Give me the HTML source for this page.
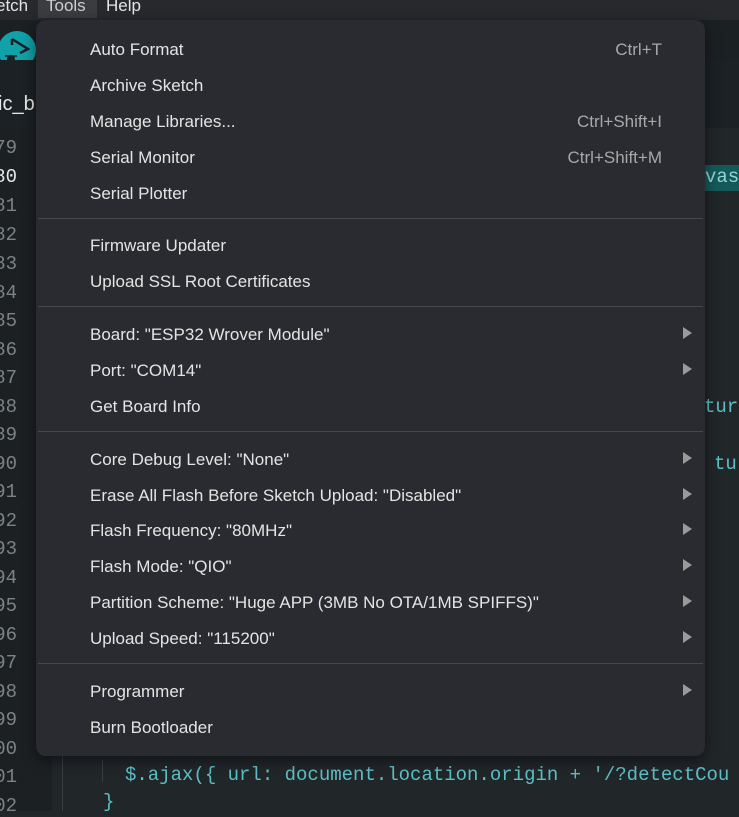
<!DOCTYPE html>
<html><head><meta charset="utf-8"><style>
body{margin:0;width:739px;height:811px;overflow:hidden;background:#212629;font-family:"Liberation Sans",sans-serif;position:relative}
.a{position:absolute}
.ln{position:absolute;left:-35px;width:52px;text-align:right;font-family:"Liberation Mono",monospace;font-size:19px;color:#7d8285}
.menu{position:absolute;left:36px;top:20px;width:669px;height:736px;background:#2a2b30;border-radius:10px;box-shadow:0 4px 14px rgba(0,0,0,.5)}
.it{position:absolute;left:54px;font-size:17px;color:#e4e4e4;line-height:20px}
.sc{position:absolute;right:43px;font-size:17px;color:#a8a8a8;line-height:20px}
.ar{position:absolute;left:647px;width:0;height:0;border-top:6px solid transparent;border-bottom:6px solid transparent;border-left:9px solid #9a9a9a}
.sp{position:absolute;left:2px;right:2px;height:1px;background:#47484c}
.code{position:absolute;font-family:"Liberation Mono",monospace;font-size:19px;color:#5cbfc6}
</style></head><body>
<div class="a" style="left:0;top:0;width:739px;height:20px;background:#27292d"></div>
<div class="a" style="left:-4px;top:-4px;font-size:17px;color:#e4e4e4">etch</div>
<div class="a" style="left:38px;top:0;width:59px;height:18px;background:#3a3c40"></div>
<div class="a" style="left:46px;top:-4px;font-size:17px;color:#cfcfcf">Tools</div>
<div class="a" style="left:106px;top:-4px;font-size:17px;color:#e4e4e4">Help</div>
<div class="a" style="left:0;top:20px;width:739px;height:40px;background:#1b2023"></div>
<div class="a" style="left:-2px;top:31px;width:38px;height:38px;border-radius:50%;background:#11a1a8"></div>
<svg class="a" style="left:0;top:31px" width="36" height="38"><path d="M12 8 L28 18 L20 22 M12 8 L12 14" stroke="#1b2023" stroke-width="2.5" fill="none"/><circle cx="11" cy="28" r="4" fill="#1b2023"/><path d="M5 25h12M5 31h12" stroke="#1b2023" stroke-width="1.6"/></svg>
<div class="a" style="left:0;top:60px;width:739px;height:68px;background:#1b2124"></div>
<div class="a" style="left:-2px;top:93px;font-size:20px;color:#e8e8e8">ic_b</div>
<div class="a" style="left:0;top:128px;width:52px;height:683px;background:#1c2023"></div>
<div class="a" style="left:705px;top:165px;width:34px;height:26px;background:#16595a"></div>
<div class="code" style="left:705px;top:166px;color:#8fd7dc">vasc</div>
<div class="code" style="left:704px;top:396px">turn</div>
<div class="code" style="left:714px;top:453px">tur</div>
<div class="a" style="left:62px;top:756px;width:1px;height:55px;background:#3a3f42"></div>
<div class="a" style="left:102px;top:760px;width:1px;height:22px;background:#3a3f42"></div>
<div class="code" style="left:125px;top:764px">$.ajax({ url: document.location.origin + '/?detectCou</div>
<div class="code" style="left:103px;top:791px">}</div>
<div class="ln" style="top:137px">79</div><div class="ln" style="top:166px;color:#e8e8e8">80</div>
<div class="ln" style="top:195px">81</div><div class="ln" style="top:224px">82</div><div class="ln" style="top:253px">83</div><div class="ln" style="top:282px">84</div><div class="ln" style="top:310px">85</div><div class="ln" style="top:339px">86</div><div class="ln" style="top:367px">87</div><div class="ln" style="top:396px">88</div><div class="ln" style="top:424px">89</div><div class="ln" style="top:453px">90</div><div class="ln" style="top:481px">91</div><div class="ln" style="top:510px">92</div><div class="ln" style="top:538px">93</div><div class="ln" style="top:567px">94</div><div class="ln" style="top:595px">95</div><div class="ln" style="top:624px">96</div><div class="ln" style="top:652px">97</div><div class="ln" style="top:681px">98</div><div class="ln" style="top:709px">99</div><div class="ln" style="top:738px">00</div><div class="ln" style="top:766px">01</div><div class="ln" style="top:795px">02</div>
<div class="menu">
<div class="it" style="top:20px">Auto Format</div><div class="sc" style="top:20px">Ctrl+T</div>
<div class="it" style="top:56px">Archive Sketch</div>
<div class="it" style="top:92px">Manage Libraries...</div><div class="sc" style="top:92px">Ctrl+Shift+I</div>
<div class="it" style="top:128px">Serial Monitor</div><div class="sc" style="top:128px">Ctrl+Shift+M</div>
<div class="it" style="top:164px">Serial Plotter</div>
<div class="sp" style="top:198px"></div>
<div class="it" style="top:216px">Firmware Updater</div>
<div class="it" style="top:252px">Upload SSL Root Certificates</div>
<div class="sp" style="top:286px"></div>
<div class="it" style="top:305px">Board: "ESP32 Wrover Module"</div><div class="ar" style="top:307px"></div>
<div class="it" style="top:341px">Port: "COM14"</div><div class="ar" style="top:343px"></div>
<div class="it" style="top:377px">Get Board Info</div>
<div class="sp" style="top:411px"></div>
<div class="it" style="top:430px">Core Debug Level: "None"</div><div class="ar" style="top:432px"></div>
<div class="it" style="top:466px">Erase All Flash Before Sketch Upload: "Disabled"</div><div class="ar" style="top:468px"></div>
<div class="it" style="top:501px">Flash Frequency: "80MHz"</div><div class="ar" style="top:503px"></div>
<div class="it" style="top:537px">Flash Mode: "QIO"</div><div class="ar" style="top:539px"></div>
<div class="it" style="top:573px">Partition Scheme: "Huge APP (3MB No OTA/1MB SPIFFS)"</div><div class="ar" style="top:575px"></div>
<div class="it" style="top:609px">Upload Speed: "115200"</div><div class="ar" style="top:611px"></div>
<div class="sp" style="top:643px"></div>
<div class="it" style="top:662px">Programmer</div><div class="ar" style="top:664px"></div>
<div class="it" style="top:698px">Burn Bootloader</div>
</div>
</body></html>
